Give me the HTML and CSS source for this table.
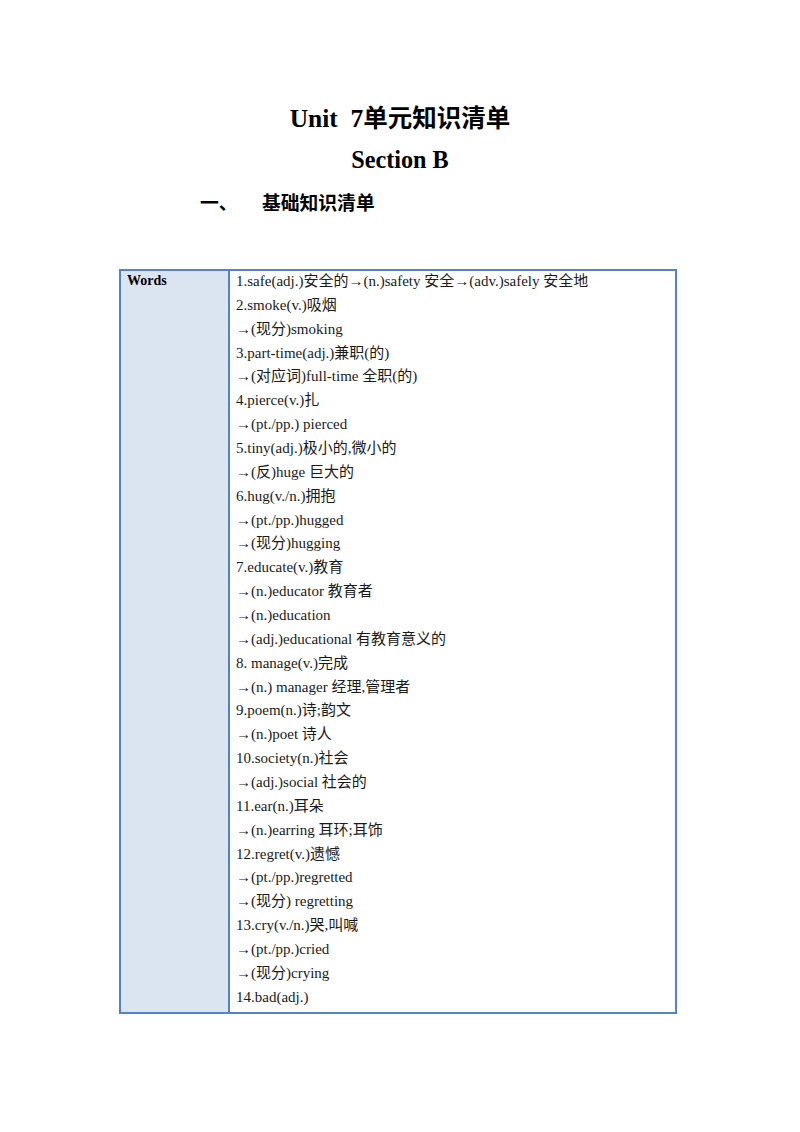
FILE: index.html
```html
<!DOCTYPE html>
<html lang="zh">
<head>
<meta charset="utf-8">
<title>Unit 7 单元知识清单</title>
<link rel="stylesheet" href="styles.css">
</head>
<body>
<div class="page">
  <h1 class="title">Unit&nbsp; 7<span class="cjk">单元知识清单</span></h1>
  <h2 class="subtitle">Section B</h2>
  <h3 class="heading"><span class="num">一、</span><span class="cjk">基础知识清单</span></h3>
  <div class="table">
    <div class="label">Words</div>
    <div class="content">
      <div class="line">1.safe(adj.)安全的→(n.)safety 安全→(adv.)safely 安全地</div>
      <div class="line">2.smoke(v.)吸烟</div>
      <div class="line">→(现分)smoking</div>
      <div class="line">3.part-time(adj.)兼职(的)</div>
      <div class="line">→(对应词)full-time 全职(的)</div>
      <div class="line">4.pierce(v.)扎</div>
      <div class="line">→(pt./pp.) pierced</div>
      <div class="line">5.tiny(adj.)极小的,微小的</div>
      <div class="line">→(反)huge 巨大的</div>
      <div class="line">6.hug(v./n.)拥抱</div>
      <div class="line">→(pt./pp.)hugged</div>
      <div class="line">→(现分)hugging</div>
      <div class="line">7.educate(v.)教育</div>
      <div class="line">→(n.)educator 教育者</div>
      <div class="line">→(n.)education</div>
      <div class="line">→(adj.)educational 有教育意义的</div>
      <div class="line">8. manage(v.)完成</div>
      <div class="line">→(n.) manager 经理,管理者</div>
      <div class="line">9.poem(n.)诗;韵文</div>
      <div class="line">→(n.)poet 诗人</div>
      <div class="line">10.society(n.)社会</div>
      <div class="line">→(adj.)social 社会的</div>
      <div class="line">11.ear(n.)耳朵</div>
      <div class="line">→(n.)earring 耳环;耳饰</div>
      <div class="line">12.regret(v.)遗憾</div>
      <div class="line">→(pt./pp.)regretted</div>
      <div class="line">→(现分) regretting</div>
      <div class="line">13.cry(v./n.)哭,叫喊</div>
      <div class="line">→(pt./pp.)cried</div>
      <div class="line">→(现分)crying</div>
      <div class="line">14.bad(adj.)</div>
    </div>
  </div>
</div>
</body>
</html>
```

FILE: styles.css
```css
html, body {
  margin: 0;
  padding: 0;
  background: #ffffff;
}

body {
  font-family: "Liberation Serif", "Noto Sans CJK SC", serif;
  color: #111111;
}

.page {
  width: 800px;
  height: 1132px;
  padding-top: 103px;
  box-sizing: border-box;
}

.title {
  margin: 0;
  text-align: center;
  font-size: 25.5px;
  line-height: 28px;
  font-weight: bold;
  color: #000000;
}

.title .cjk {
  font-family: "Noto Sans CJK SC", sans-serif;
  font-weight: bold;
  font-size: 24.5px;
}

.subtitle {
  margin: 13px 0 0 0;
  text-align: center;
  font-size: 24.2px;
  line-height: 28px;
  font-weight: bold;
  color: #000000;
}

.heading {
  margin: 16px 0 0 200px;
  display: flex;
  align-items: center;
  font-size: 18.8px;
  line-height: 24px;
  font-weight: bold;
  color: #000000;
  font-family: "Noto Sans CJK SC", sans-serif;
}

.heading .num {
  width: 62px;
}

.table {
  margin: 55px 0 0 119px;
  width: 558px;
  box-sizing: border-box;
  border: 2px solid #5283c8;
  display: grid;
  grid-template-columns: 109px 1fr;
}

.label {
  background: #dbe5f2;
  border-right: 2px solid #5283c8;
  padding: 2px 0 0 6px;
  font-size: 14px;
  font-weight: bold;
  line-height: 16px;
  color: #000000;
}

.content {
  padding: 0 0 2px 6px;
  font-size: 15px;
  color: #1a1a1a;
}

.line {
  height: 23.87px;
  line-height: 23.87px;
  white-space: nowrap;
}

.line:first-child {
  margin-top: -1px;
}
```
